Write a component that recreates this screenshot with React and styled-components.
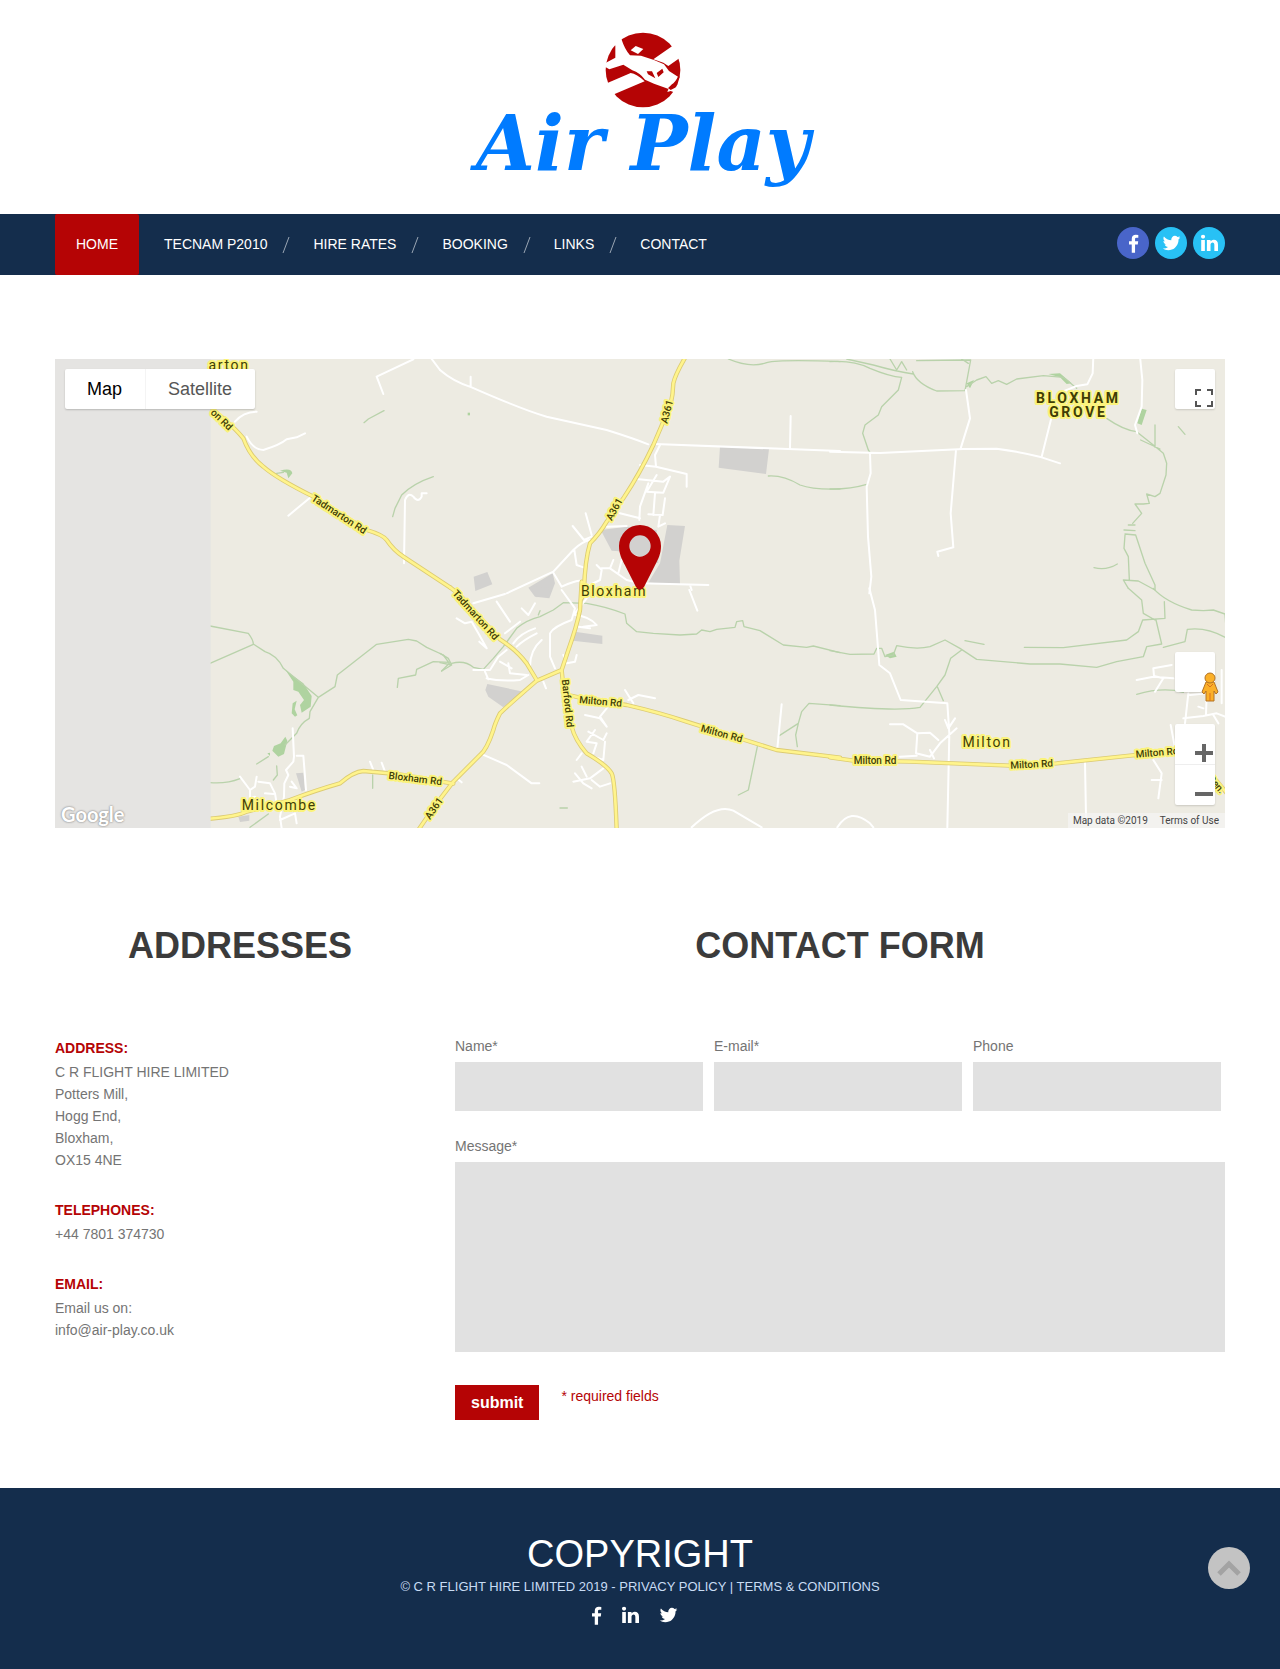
import React from 'react';
import styled, { createGlobalStyle } from 'styled-components';

const GlobalStyle = createGlobalStyle`
    *{
        box-sizing: border-box;
    }
    body{
        margin: 0;
        background-color: #ffffff;
        color: #747474;
        font-family: "Liberation Sans", Arial, sans-serif;
        font-size: 14px;
        line-height: 22px;
    }
    a{
        color: inherit;
        text-decoration: none;
    }
`;

//Layout

const Container = styled.div`
    max-width: 1200px;
    margin: 0 auto;
    padding: 0 15px;
`;

const Columns = styled(Container)`
    display: grid;
    grid-template-columns: 370fr 770fr;
    column-gap: 30px;
    padding-bottom: 68px;
    @media (max-width: 800px){
        grid-template-columns: 1fr;
    }
`;

const Title = styled.h2`
    margin: 0 0 69px;
    color: #3b3b3b;
    font-size: 36px;
    line-height: 44px;
    text-align: center;
`;

//Header

const Header = styled.header`
    display: flex;
    justify-content: center;
    padding: 32px 15px 34px;
`;

const Logo = styled.a`
    display: flex;
    flex-direction: column;
    align-items: center;
    padding-left: 6px;
`;

const LogoMark = styled.svg`
    display: block;
    width: 78px;
    height: 76px;
`;

const LogoText = styled.span`
    color: #007bff;
    font-family: "DejaVu Serif", serif;
    font-size: 76px;
    font-style: italic;
    font-weight: bold;
    line-height: 72px;
`;

const NavBar = styled.nav`
    background-color: #142d4c;
    color: #ffffff;
`;

const NavRow = styled(Container)`
    display: flex;
    flex-wrap: wrap;
    justify-content: space-between;
    align-items: center;
`;

const Menu = styled.ul`
    display: flex;
    flex-wrap: wrap;
    margin: 0;
    padding: 0;
    list-style: none;
`;

const MenuItem = styled.li`
    display: flex;
    align-items: center;
    line-height: 61px;
`;

const HomeLink = styled.a`
    margin-right: 25px;
    padding: 0 21px;
    border-radius: 2px;
    background-color: #b50405;
`;

const Slash = styled.svg`
    width: 8px;
    height: 18px;
    margin: 0 23px 0 15px;
`;

const SocialRow = styled.div`
    display: flex;
    gap: 6px;
`;

const SocialCircle = styled.a`
    display: flex;
    justify-content: center;
    align-items: center;
    width: 32px;
    height: 32px;
    margin-bottom: 3px;
    border-radius: 50%;
    background-color: ${props => props.$color};
`;

const Glyph = styled.svg`
    display: block;
    height: 20px;
    fill: #ffffff;
`;

//Map

const MapBox = styled.div`
    position: relative;
    margin: 84px 0 96px;
    overflow: hidden;
    font-family: Roboto, sans-serif;
`;

const MapDrawing = styled.svg`
    display: block;
    width: 100%;
    height: 469px;
    font-family: Roboto, sans-serif;
`;

const MapTypes = styled.div`
    position: absolute;
    top: 10px;
    left: 10px;
    display: flex;
    border-radius: 2px;
    background-color: #ffffff;
    box-shadow: 0 1px 2px rgba(0,0,0,0.2);
`;

const MapType = styled.button`
    height: 40px;
    padding: 0 23px 0 22px;
    border: none;
    background: none;
    color: ${props => props.$active ? '#000000' : '#565656'};
    font-family: "Liberation Sans", Arial, sans-serif;
    font-size: 18px;
    & + &{
        border-left: 1px solid #f4f4f4;
    }
`;

const MapControls = styled.div`
    position: absolute;
    top: 10px;
    right: 10px;
    bottom: 23px;
    display: flex;
    flex-direction: column;
`;

const ControlPanel = styled.div`
    width: 40px;
    border-radius: 2px;
    background-color: #ffffff;
    box-shadow: 0 1px 2px rgba(0,0,0,0.15);
    &:nth-child(2){
        margin: auto 0 32px;
    }
`;

const ControlButton = styled.button`
    display: flex;
    align-items: flex-start;
    width: 40px;
    height: ${props => props.$height || 40}px;
    padding: 20px 0 0 20px;
    border: none;
    background: none;
    & + &{
        border-top: 1px solid #eeeeee;
    }
    svg{
        flex: none;
    }
`;

const GoogleMark = styled.span`
    position: absolute;
    left: 6px;
    bottom: 3px;
    color: #ffffff;
    font-family: Lato, sans-serif;
    font-size: 20px;
    font-weight: bold;
    text-shadow: 0 0 2px #888888, 0 0 2px #aaaaaa;
`;

const MapCredits = styled.div`
    position: absolute;
    right: 0;
    bottom: 0;
    display: flex;
    gap: 12px;
    padding: 0 6px 0 5px;
    background-color: rgba(245,245,245,0.7);
    color: #444444;
    font-size: 10px;
    line-height: 15px;
`;

//Addresses

const ContactList = styled.dl`
    margin: 0;
`;

const ContactTerm = styled.dt`
    padding-bottom: 2px;
    color: #b50405;
    font-weight: bold;
`;

const ContactText = styled.dd`
    margin: 0 0 28px;
    white-space: pre-line;
`;

//Form

const Fields = styled.div`
    display: grid;
    grid-template-columns: repeat(3, 1fr);
    gap: 11px;
    padding: 0 4px 26px 0;
`;

const Field = styled.label`
    display: flex;
    flex-direction: column;
    gap: 5px;
    margin-top: -2px;
`;

const Input = styled.input`
    width: 100%;
    height: 49px;
    padding: 0 12px;
    border: none;
    background-color: #e1e1e1;
    font: inherit;
`;

const TextArea = styled.textarea`
    width: 100%;
    height: 190px;
    padding: 12px;
    border: none;
    background-color: #e1e1e1;
    font: inherit;
    resize: none;
`;

const FormFooter = styled.div`
    display: flex;
    align-items: flex-start;
    gap: 22px;
    padding-top: 33px;
    color: #b50405;
`;

const Submit = styled.button`
    height: 35px;
    padding: 0 16px;
    border: none;
    background-color: #b50405;
    color: #ffffff;
    font-family: inherit;
    font-size: 16px;
    font-weight: bold;
`;

//Footer

const Footer = styled.footer`
    display: flex;
    flex-direction: column;
    align-items: center;
    padding: 44px 15px 44px;
    background-color: #142d4c;
    color: #c8dcf4;
    font-size: 13px;
`;

const FooterTitle = styled.h2`
    margin: 0;
    color: #ffffff;
    font-size: 38px;
    font-weight: normal;
    line-height: 44px;
`;

const FooterSocial = styled.div`
    display: flex;
    gap: 20px;
    padding: 7px 11px 0 0;
`;

const ToTop = styled.button`
    position: fixed;
    right: 30px;
    bottom: 80px;
    display: flex;
    justify-content: center;
    align-items: center;
    width: 42px;
    height: 42px;
    padding: 0;
    border: none;
    border-radius: 50%;
    background-color: #c3c3c3;
`;

//Map data, three units to a pixel, one entry per tile

const tiles = [
    {
        x: -15, y: -27,
        yellow: 'M470 162L520 205Q560 240 580 265Q600 320 640 350Q680 385 790 440L950 540Q1000 555 1010 570Q1030 600 1060 620L1200 712',
        white: 'M1000 132L980 80L1090 28M1140 20L1170 60M555 215Q580 185 620 185M590 260Q610 300 640 300Q690 285 710 268L740 262L765 250M715 497L780 443M1062 640L1065 450Q1075 425 1090 440Q1105 460 1115 440L1115 430L1130 430',
        green: 'M942 218L955 207L1002 182M1028 500L1035 475L1055 435Q1090 400 1150 380M680 370L700 367',
        woods: 'M690 362Q725 352 727 370L715 385L710 368Z',
        grey: '',
    },
    {
        x: -15, y: 693,
        yellow: 'M470 687Q560 680 590 665L720 630Q800 600 870 580Q910 545 940 543L1040 552L1210 581',
        white: 'M728 415L732 500L730 515L708 540L715 555L703 580L702 620L690 680L695 715M740 497L760 497L765 560L768 600M570 560L600 600L615 590L620 560M625 575L660 580L675 610L680 640M600 600L600 625L615 620M645 610L670 612M725 575L740 595L720 590M690 690L735 670L740 700M960 515L972 545M995 518L1005 545',
        green: 'M480 108L595 130Q610 150 610 162L645 185Q680 195 700 235L805 322M480 220L610 163M805 322L780 365L778 385Q750 400 740 430L705 465M805 322L855 290L862 255L980 163L1075 148L1100 153L1130 172L1180 195L1198 220L1175 243M1198 217L1150 215L1100 238L1097 255L1045 265L1042 292M620 522L655 500M480 578Q530 582 570 566M680 528L682 555L670 570M968 555L968 595M600 712L655 672',
        woods: 'M708 242L760 280L785 318L782 350L755 368L750 345L762 330L745 305L730 300L730 275ZM740 332L728 340L725 370L735 380L742 376L734 358ZM706 440L712 452L702 492L685 500L667 482L672 468L692 460ZM652 490L660 488L660 498Z',
        grey: 'M738 550L760 548L765 600L755 605ZM565 680L598 675L598 692L570 696Z',
    },
    {
        x: 1155, y: -27,
        yellow: 'M737 20Q705 75 700 100Q698 170 670 215L640 285Q600 370 550 445L500 515Q480 550 450 580Q435 630 432 720L425 745',
        white: 'M0 60Q40 95 95 112Q250 180 320 200L500 240Q580 265 625 283M645 282L1200 303M92 80L92 110M1052 198L1050 294M660 285L645 315L648 350L740 372L740 410M600 345L648 350M590 387L670 395L690 380M650 375L620 425L670 428L690 380M625 400L600 470L598 510M645 430L640 495M675 445L668 495L625 493M660 495L655 530L675 520M540 490L600 505M500 530L560 528M437 490L455 555M398 528L432 570L455 560M200 730L340 665L400 600Q425 575 450 570M403 600L410 645L430 652M340 668L365 710Q420 685 430 695M485 655L510 655L560 690L600 700L805 705M470 645L485 660L480 690L440 710M520 630L510 655M545 630L535 670M750 705L755 720',
        green: 'M865 27Q930 55 980 38Q1020 28 1200 35M985 378Q1030 375 1080 405Q1120 420 1200 417',
        woods: 'M83 188L90 188L90 196L83 196Z',
        grey: 'M840 290L987 297L978 372L836 353ZM482 540L560 530L650 540L655 640L560 605L515 602ZM682 525L735 528L718 632L720 702L625 698L660 640ZM101 680L142 666L157 703L106 723ZM265 713L338 670L345 700L328 745L285 740Z',
    },
    {
        x: 1155, y: 693,
        yellow: 'M30 -8L60 15L180 148Q230 180 260 220L290 270M425 -25L420 60Q410 110 385 180L365 240L290 272Q200 350 180 370Q165 400 160 420Q140 480 120 495L40 575L-10 640L-65 720M365 240L370 290Q390 370 395 410Q405 450 440 490Q500 525 515 550Q525 570 530 720M385 315L430 325L560 345Q660 368 740 395Q900 445 1010 480L1200 503',
        white: 'M100 40L195 12M170 35L210 95M245 55L265 75L285 40M195 130L240 95M50 85L75 100L95 95L115 130L140 175L118 155M365 0L405 55L395 90Q340 110 330 130L330 200L345 235M405 75Q450 80 470 105L430 110M415 110L450 115M285 115Q240 130 220 160M290 130Q250 150 230 170M305 150Q270 180 270 230M140 265Q180 275 240 270L265 255M100 240L150 240L175 200L200 180M135 245L145 268M205 220L210 250L260 255M180 215L215 235M440 25L405 70M748 0L772 62M120 490L200 525L275 580L298 580M50 565L65 577M555 300L580 340M565 330L595 315L645 325M435 375L480 385L500 410L480 380L500 355M445 425L490 450L500 430M465 420L440 455L470 460L460 490M495 455L490 510L460 500M410 510L425 490M400 575L450 565L490 535M425 530L440 560M405 550L430 580L455 595M455 570L480 590L510 580M1025 343L1012 475M310 275L318 295M370 195L380 220L405 215L410 195M755 712Q830 640 880 662L965 712',
        green: 'M0 190L25 205L35 225L0 218M35 225L5 243M35 220Q75 210 100 232L130 238L160 205L190 170L230 115Q260 90 300 80L340 60L370 38L440 40Q500 50 555 72L560 100L590 125L640 130L720 135L770 132L785 120L810 125L830 118L885 112L890 95L908 92L912 110L960 122L1030 165L1100 172L1120 168L1200 188M295 75L300 62M1200 347L1107 340L1085 365L1075 400L1018 437M1075 400L1067 435L1072 470M952 470L925 600L895 615M360 654L382 654',
        woods: '',
        grey: 'M275 -10L325 -8L330 15L290 22ZM142 282L250 305L190 352L145 320L136 300ZM405 125L487 137L487 162L398 152Z',
    },
    {
        x: 2325, y: -27,
        yellow: '',
        white: 'M0 305L150 309L400 297L500 296Q580 307 635 322L690 340M790 20L788 70L772 103L740 108L705 122M930 20L937 90L935 170L915 225L922 250M408 120L420 205L392 295M378 300L362 490L370 592L322 605L325 618M665 200L635 320M120 310L122 370L110 410L114 560L124 680L118 730',
        green: 'M0 35Q70 30 120 55Q180 80 215 82M50 27L130 45Q200 65 250 72M215 82L205 120L155 170L145 195L105 225L98 250L115 300L122 310M0 417Q60 418 110 403M180 27L200 60L215 35L230 60M248 65Q260 100 320 123L405 122L422 30M260 32L420 30M395 27L415 40M410 110L440 90L468 80L485 100L505 92L530 103L560 87L640 77L700 82L740 115M830 205Q880 240 920 245L970 285L1000 310L1010 340L1008 375L990 430L975 440L950 432L958 460L940 462L915 462L935 490L908 520M975 225L975 292M932 270L990 297M1045 230L1065 253M895 525L915 525M882 540L915 542M885 552L917 555L945 640L975 705L975 720L925 693L880 690L895 715M885 555L882 595L895 620L898 690M792 653Q830 662 862 642',
        woods: 'M655 72L690 70L725 100L710 102L690 82ZM935 176L950 180L935 225L922 220ZM410 100L432 90L420 115Z',
        grey: '',
    },
    {
        x: 2325, y: 693,
        yellow: 'M0 502L70 512L240 515L540 527L680 520L900 497L1080 480M1120 525L1195 615',
        white: 'M118 -5L135 60L148 225L180 250L212 330L352 340L358 430L352 712M180 403L220 403L262 430L258 490L300 500L330 460L380 415M262 430L300 428L325 450M345 390L355 415L375 385M210 500L260 497M300 480L312 505M765 515L768 680M970 510L995 550L985 625M965 570L995 570M920 270L970 260L1030 265M970 235L1025 225M970 235L972 258L1000 265L975 305M1075 310L1065 400M1060 385L1120 378L1160 370L1185 380M1080 315L1130 310L1128 375M1175 240L1175 340M1105 350L1120 355M1022 405L1040 500M1150 375L1165 400M22 712Q60 650 120 700L130 712',
        green: 'M0 182L60 193L132 192L140 175L155 175L165 200L190 195L200 167Q260 180 300 170L345 150L390 175L440 208L600 222L690 222L800 232L860 215L940 200L950 170L995 162L978 90M405 152L462 163M0 345Q200 365 270 352L320 290L345 255L362 205L395 180M322 290L340 332M583 172L700 173L890 150L925 125L938 90L1005 85L1003 35M895 -5L935 30L940 70L975 90M970 -5Q1005 35 1085 60L1120 62L1150 60L1185 72L1187 100M1000 172L1065 155L1072 118Q1130 110 1187 143M920 313Q1000 290 1060 307',
        woods: 'M165 195L192 185L200 200L180 205Z',
        grey: '',
    },
];

// text, x, y, angle, kind
const mapLabels = [
    ['arton', 522, 33, 0, 'place'],
    ['on Rd', 500, 182, 44, 'road'],
    ['Tadmarton Rd', 852, 466, 33, 'road'],
    ['Bloxham Rd', 1081, 1259, 7, 'road'],
    ['A361', 1137, 1348, -55, 'road'],
    ['Milcombe', 673, 1353, 0, 'place'],
    ['A361', 1836, 158, -75, 'road'],
    ['A361', 1678, 451, -62, 'road'],
    ['Tadmarton Rd', 1262, 768, 48, 'road'],
    ['Bloxham', 1677, 711, 0, 'place'],
    ['Barford Rd', 1538, 1033, 84, 'road'],
    ['Milton Rd', 1637, 1028, 5, 'road'],
    ['Milton Rd', 2000, 1124, 15, 'road'],
    ['BLOXHAM', 3070, 132, 0, 'area'],
    ['GROVE', 3070, 174, 0, 'area'],
    ['Milton', 2796, 1165, 0, 'place'],
    ['Milton Rd', 2460, 1206, 0, 'road'],
    ['Milton Rd', 2930, 1216, -3, 'road'],
    ['Milton Rd', 3306, 1181, -5, 'road'],
    ['Pen.', 3484, 1276, 50, 'road'],
];

const labelKinds = {
    road: { fontSize: 30, fontWeight: 500 },
    place: { fontSize: 42, fontWeight: 400, letterSpacing: 5 },
    area: { fontSize: 42, fontWeight: 700, letterSpacing: 8 },
};

const layers = [
    { name: 'grey', fill: '#d2d1cf' },
    { name: 'woods', fill: '#afd3a0' },
    { name: 'green', fill: 'none', stroke: '#b9d2ab', strokeWidth: 4 },
    { name: 'white', fill: 'none', stroke: '#ffffff', strokeWidth: 6 },
    { name: 'yellow', fill: 'none', stroke: '#dccb72', strokeWidth: 13 },
    { name: 'yellow', fill: 'none', stroke: '#fff48c', strokeWidth: 8 },
];

const menu = ['TECNAM P2010', 'HIRE RATES', 'BOOKING', 'LINKS', 'CONTACT'];

function FacebookIcon() {
  return (
    <Glyph viewBox="0 0 1024 1792" width="11" aria-hidden="true">
        <path d="M959 140v264h-157q-86 0-116 36t-30 108v189h293l-39 296h-254v759h-306v-759h-255v-296h255v-218q0-186 104-288.5t277-102.5q147 0 228 12z"/>
    </Glyph>
  )
}

function TwitterIcon() {
  return (
    <Glyph viewBox="0 0 1664 1792" width="19" aria-hidden="true">
        <path d="M1620 408q-67 98-162 167 1 14 1 42 0 130-38 259.5t-115.5 248.5-184.5 210.5-258 146-323 54.5q-271 0-496-145 35 4 78 4 225 0 401-138-105-2-188-64.5t-114-159.5q33 5 61 5 43 0 85-11-112-23-185.5-111.5t-73.5-205.5v-4q68 38 146 41-66-44-105-115t-39-154q0-88 44-163 121 149 294.5 238.5t371.5 99.5q-8-38-8-74 0-134 94.5-228.5t228.5-94.5q140 0 236 102 109-21 205-78-37 115-142 178 93-10 186-50z"/>
    </Glyph>
  )
}

function LinkedinIcon() {
  return (
    <Glyph viewBox="0 0 1536 1792" width="17" aria-hidden="true">
        <path d="M349 625v991h-330v-991h330zm21-306q1 73-50.5 122t-135.5 49h-2q-82 0-132-49t-50-122q0-74 51.5-122.5t134.5-48.5 133 48.5 51 122.5zm1166 729v568h-329v-530q0-105-40.5-164.5t-126.5-59.5q-63 0-105.5 34.5t-63.5 85.5q-11 30-11 81v553h-329q2-399 2-647t-1-296l-1-48h329v144h-2q20-32 41-56t56.5-52 87-43.5 114.5-15.5q171 0 275 113.5t104 332.5z"/>
    </Glyph>
  )
}

function LogoPlane() {
  return (
    <LogoMark viewBox="490 37 234 228" aria-hidden="true">
        <circle cx="607" cy="151" r="112" fill="#b50405"/>
        <g fill="#ffffff">
            <path d="M524 78L500 40L535 30L543 60Q552 88 568 107L601 108L640 121L670 134L685 154L713 172Q708 189 694 196L684 208L640 192L613 180Q598 160 575 152L548 135L506 149L490 140L490 132L524 114Z"/>
            <path d="M490 192L502 189L570 160Q588 162 612 185L522 223L500 240Z"/>
            <path d="M638 119L694 80L712 66L730 108L716 116L683 139L668 129Z"/>
            <path d="M570 92L585 79L608 88L592 103Z"/>
            <path d="M680 217L684 206L690 211L712 200L716 212L700 218L690 214Z"/>
        </g>
        <path d="M618 155L634 155L644 176L622 164ZM648 160L665 147L669 158L653 172Z" fill="#b50405"/>
        <path d="M715 170Q706 190 694 197L684 207" fill="none" stroke="#b50405" strokeWidth="5"/>
    </LogoMark>
  )
}

function RoadMap() {
  return (
    <MapDrawing viewBox="0 0 3510 1407" preserveAspectRatio="xMidYMid slice" role="img" aria-label="Map of Bloxham">
        <rect width="3510" height="1407" fill="#edebe2"/>
        {layers.map((layer, i) => (
            <g key={i} fill={layer.fill} stroke={layer.stroke} strokeWidth={layer.strokeWidth} strokeLinecap="round" strokeLinejoin="round">
                {tiles.map((tile, j) => tile[layer.name] && (
                    <path key={j} transform={`translate(${tile.x} ${tile.y})`} d={tile[layer.name]}/>
                ))}
            </g>
        ))}
        <rect width="467" height="1407" fill="#e5e4e2"/>
        <g fill="#3f3d05" stroke="#fbf37b" strokeWidth="12" strokeLinejoin="round" textAnchor="middle" paintOrder="stroke">
            {mapLabels.map(([text, x, y, angle, kind], i) => (
                <text key={i} x={x} y={y} dy={kind === 'road' ? 10 : 0} transform={`rotate(${angle} ${x} ${y})`} {...labelKinds[kind]}>{text}</text>
            ))}
        </g>
        <path d="M1755 498a63 63 0 0 0-63 63c0 24 8 38 18 58l33 65q12 15 24 0l33-65c10-20 18-34 18-58a63 63 0 0 0-63-63zm0 31a32 32 0 1 1 0 64a32 32 0 0 1 0-64z" fill="#b50405"/>
    </MapDrawing>
  )
}

function MapPanel() {
  return (
    <MapBox>
        <RoadMap/>
        <MapTypes>
            <MapType type="button" $active>Map</MapType>
            <MapType type="button">Satellite</MapType>
        </MapTypes>
        <MapControls>
            <ControlPanel>
                <ControlButton type="button" aria-label="Full screen">
                    <svg width="18" height="18" viewBox="0 0 18 18" fill="none" stroke="#555555" strokeWidth="2">
                        <path d="M1 6V1H6M12 1H17V6M17 12V17H12M6 17H1V12"/>
                    </svg>
                </ControlButton>
            </ControlPanel>
            <ControlPanel>
                <ControlButton type="button" aria-label="Street view">
                    <svg width="30" height="30" viewBox="0 0 30 30" fill="#fbb028" stroke="#b27325">
                        <path d="M11 10L7 20L9 22L11 19V29H19V19L21 22L23 20L19 10Z"/>
                        <circle cx="15" cy="6" r="5"/>
                        <path d="M12 12L15 15L18 12M15 21V29" fill="none" stroke="#d9701e"/>
                    </svg>
                </ControlButton>
            </ControlPanel>
            <ControlPanel>
                <ControlButton type="button" aria-label="Zoom in">
                    <svg width="18" height="18" viewBox="0 0 18 18" stroke="#666666" strokeWidth="4">
                        <path d="M0 9H18M9 0V18"/>
                    </svg>
                </ControlButton>
                <ControlButton type="button" aria-label="Zoom out" $height={41}>
                    <svg width="18" height="18" viewBox="0 0 18 18" stroke="#666666" strokeWidth="4">
                        <path d="M0 9H18"/>
                    </svg>
                </ControlButton>
            </ControlPanel>
        </MapControls>
        <GoogleMark>Google</GoogleMark>
        <MapCredits>
            <span>Map data ©2019</span>
            <a href="#terms-of-use">Terms of Use</a>
        </MapCredits>
    </MapBox>
  )
}

function App() {
  return (
    <>
        <GlobalStyle/>
        <Header>
            <Logo href="#home">
                <LogoPlane/>
                <LogoText>Air Play</LogoText>
            </Logo>
        </Header>
        <NavBar>
            <NavRow>
                <Menu>
                    <MenuItem><HomeLink href="#home">HOME</HomeLink></MenuItem>
                    {menu.map((item, i) => (
                        <MenuItem key={item}>
                            <a href="#page">{item}</a>
                            {i < menu.length - 1 && (
                                <Slash viewBox="0 0 8 18" stroke="#9aa6b4" aria-hidden="true"><path d="M1 17L7 1"/></Slash>
                            )}
                        </MenuItem>
                    ))}
                </Menu>
                <SocialRow>
                    <SocialCircle href="#facebook" aria-label="Facebook" $color="#4965c9"><FacebookIcon/></SocialCircle>
                    <SocialCircle href="#twitter" aria-label="Twitter" $color="#28c1f5"><TwitterIcon/></SocialCircle>
                    <SocialCircle href="#linkedin" aria-label="LinkedIn" $color="#28c1f5"><LinkedinIcon/></SocialCircle>
                </SocialRow>
            </NavRow>
        </NavBar>
        <Container>
            <MapPanel/>
        </Container>
        <Columns>
            <section>
                <Title>ADDRESSES</Title>
                <ContactList>
                    <ContactTerm>ADDRESS:</ContactTerm>
                    <ContactText>{'C R FLIGHT HIRE LIMITED\nPotters Mill,\nHogg End,\nBloxham,\nOX15 4NE'}</ContactText>
                    <ContactTerm>TELEPHONES:</ContactTerm>
                    <ContactText>+44 7801 374730</ContactText>
                    <ContactTerm>EMAIL:</ContactTerm>
                    <ContactText>Email us on:<br/><a href="mailto:info@air-play.co.uk">info@air-play.co.uk</a></ContactText>
                </ContactList>
            </section>
            <section>
                <Title>CONTACT FORM</Title>
                <form>
                    <Fields>
                        <Field>Name*<Input type="text" name="name"/></Field>
                        <Field>E-mail*<Input type="email" name="email"/></Field>
                        <Field>Phone<Input type="tel" name="phone"/></Field>
                    </Fields>
                    <Field>Message*<TextArea name="message"/></Field>
                    <FormFooter>
                        <Submit type="button">submit</Submit>
                        <span>* required fields</span>
                    </FormFooter>
                </form>
            </section>
        </Columns>
        <Footer>
            <FooterTitle>COPYRIGHT</FooterTitle>
            <span>© C R FLIGHT HIRE LIMITED 2019 - <a href="#privacy">PRIVACY POLICY</a> | <a href="#terms">TERMS &amp; CONDITIONS</a></span>
            <FooterSocial>
                <a href="#facebook" aria-label="Facebook"><FacebookIcon/></a>
                <a href="#linkedin" aria-label="LinkedIn"><LinkedinIcon/></a>
                <a href="#twitter" aria-label="Twitter"><TwitterIcon/></a>
            </FooterSocial>
        </Footer>
        <ToTop type="button" aria-label="Back to top">
            <svg width="24" height="16" viewBox="0 0 24 16" fill="none" stroke="#a3a3a3" strokeWidth="5">
                <path d="M2 14L12 4L22 14"/>
            </svg>
        </ToTop>
    </>
  )
}

export default App
